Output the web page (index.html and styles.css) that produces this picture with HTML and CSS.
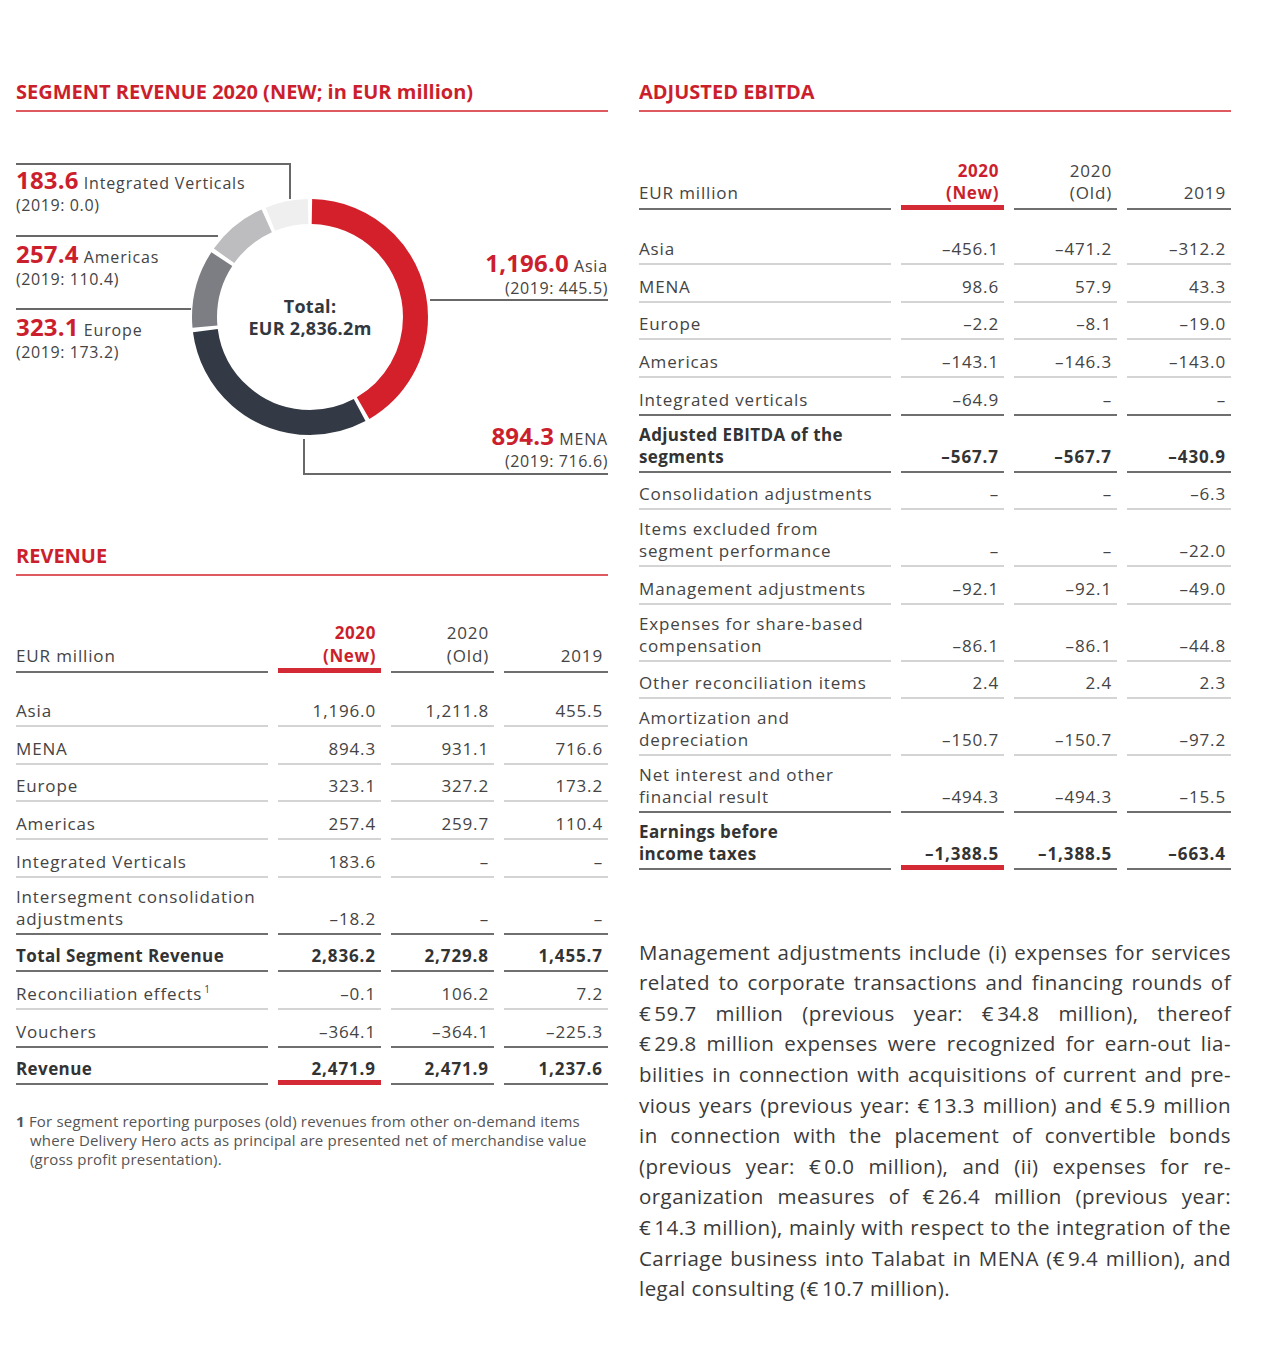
FILE: index.html
```html
<!DOCTYPE html>
<html lang="en">
<head>
<meta charset="utf-8">
<title>Segment revenue and adjusted EBITDA</title>
<link rel="stylesheet" href="styles.css">
</head>
<body>
<main class="page">
  <section class="col">
    <h2 class="heading">SEGMENT REVENUE 2020 (NEW; in EUR million)</h2>
    <div class="chart">
      <div class="leader leader-iv"></div>
      <div class="leader leader-am"></div>
      <div class="leader leader-eu"></div>
      <div class="leader leader-as"></div>
      <div class="leader leader-me"></div>

      <svg class="donut" width="236" height="236" viewBox="0 0 236 236">
        <g transform="rotate(-90 118 118)" fill="none" stroke-width="25">
          <circle cx="118" cy="118" r="105.5" pathLength="100" stroke="#d4202b" stroke-dasharray="41.3 58.7" stroke-dashoffset="-0.3"/>
          <circle cx="118" cy="118" r="105.5" pathLength="100" stroke="#343a45" stroke-dasharray="30.73 69.27" stroke-dashoffset="-42.2"/>
          <circle cx="118" cy="118" r="105.5" pathLength="100" stroke="#7d7e83" stroke-dasharray="10.72 89.28" stroke-dashoffset="-73.53"/>
          <circle cx="118" cy="118" r="105.5" pathLength="100" stroke="#bdbdbf" stroke-dasharray="8.42 91.58" stroke-dashoffset="-84.85"/>
          <circle cx="118" cy="118" r="105.5" pathLength="100" stroke="#efefef" stroke-dasharray="5.83 94.17" stroke-dashoffset="-93.87"/>
        </g>
      </svg>
      <div class="donut-total"><span>Total:</span><span>EUR 2,836.2m</span></div>

      <div class="lab lab-iv"><div><b>183.6</b> Integrated Verticals</div><div class="prev">(2019: 0.0)</div></div>
      <div class="lab lab-am"><div><b>257.4</b> Americas</div><div class="prev">(2019: 110.4)</div></div>
      <div class="lab lab-eu"><div><b>323.1</b> Europe</div><div class="prev">(2019: 173.2)</div></div>
      <div class="lab lab-as"><div><b>1,196.0</b> Asia</div><div class="prev">(2019: 445.5)</div></div>
      <div class="lab lab-me"><div><b>894.3</b> MENA</div><div class="prev">(2019: 716.6)</div></div>
    </div>

    <h2 class="heading">REVENUE</h2>
    <div class="table table-rev">
      <div class="row head">
        <div class="c"><span>EUR million</span></div>
        <div class="c n new"><span>2020<br>(New)</span></div>
        <div class="c n"><span>2020<br>(Old)</span></div>
        <div class="c n"><span>2019</span></div>
      </div>
      <div class="row first">
        <div class="c"><span>Asia</span></div><div class="c n"><span>1,196.0</span></div><div class="c n"><span>1,211.8</span></div><div class="c n"><span>455.5</span></div>
      </div>
      <div class="row">
        <div class="c"><span>MENA</span></div><div class="c n"><span>894.3</span></div><div class="c n"><span>931.1</span></div><div class="c n"><span>716.6</span></div>
      </div>
      <div class="row">
        <div class="c"><span>Europe</span></div><div class="c n"><span>323.1</span></div><div class="c n"><span>327.2</span></div><div class="c n"><span>173.2</span></div>
      </div>
      <div class="row">
        <div class="c"><span>Americas</span></div><div class="c n"><span>257.4</span></div><div class="c n"><span>259.7</span></div><div class="c n"><span>110.4</span></div>
      </div>
      <div class="row">
        <div class="c"><span>Integrated Verticals</span></div><div class="c n"><span>183.6</span></div><div class="c n"><span>–</span></div><div class="c n"><span>–</span></div>
      </div>
      <div class="row dark">
        <div class="c"><span>Intersegment consolidation<br>adjustments</span></div><div class="c n"><span>–18.2</span></div><div class="c n"><span>–</span></div><div class="c n"><span>–</span></div>
      </div>
      <div class="row dark total">
        <div class="c"><span>Total Segment Revenue</span></div><div class="c n"><span>2,836.2</span></div><div class="c n"><span>2,729.8</span></div><div class="c n"><span>1,455.7</span></div>
      </div>
      <div class="row">
        <div class="c"><span>Reconciliation effects<sup>1</sup></span></div><div class="c n"><span>–0.1</span></div><div class="c n"><span>106.2</span></div><div class="c n"><span>7.2</span></div>
      </div>
      <div class="row dark">
        <div class="c"><span>Vouchers</span></div><div class="c n"><span>–364.1</span></div><div class="c n"><span>–364.1</span></div><div class="c n"><span>–225.3</span></div>
      </div>
      <div class="row dark total">
        <div class="c"><span>Revenue</span></div><div class="c n red"><span>2,471.9</span></div><div class="c n"><span>2,471.9</span></div><div class="c n"><span>1,237.6</span></div>
      </div>
    </div>
    <p class="footnote"><b>1</b> For segment reporting purposes (old) revenues from other on-demand items<br>where Delivery Hero acts as principal are presented net of merchandise value<br>(gross profit presentation).</p>
  </section>

  <section class="col">
    <h2 class="heading">ADJUSTED EBITDA</h2>
    <div class="table table-ebitda">
      <div class="row head">
        <div class="c"><span>EUR million</span></div>
        <div class="c n new"><span>2020<br>(New)</span></div>
        <div class="c n"><span>2020<br>(Old)</span></div>
        <div class="c n"><span>2019</span></div>
      </div>
      <div class="row first">
        <div class="c"><span>Asia</span></div><div class="c n"><span>–456.1</span></div><div class="c n"><span>–471.2</span></div><div class="c n"><span>–312.2</span></div>
      </div>
      <div class="row">
        <div class="c"><span>MENA</span></div><div class="c n"><span>98.6</span></div><div class="c n"><span>57.9</span></div><div class="c n"><span>43.3</span></div>
      </div>
      <div class="row">
        <div class="c"><span>Europe</span></div><div class="c n"><span>–2.2</span></div><div class="c n"><span>–8.1</span></div><div class="c n"><span>–19.0</span></div>
      </div>
      <div class="row">
        <div class="c"><span>Americas</span></div><div class="c n"><span>–143.1</span></div><div class="c n"><span>–146.3</span></div><div class="c n"><span>–143.0</span></div>
      </div>
      <div class="row dark">
        <div class="c"><span>Integrated verticals</span></div><div class="c n"><span>–64.9</span></div><div class="c n"><span>–</span></div><div class="c n"><span>–</span></div>
      </div>
      <div class="row dark total">
        <div class="c"><span>Adjusted EBITDA of the<br>segments</span></div><div class="c n"><span>–567.7</span></div><div class="c n"><span>–567.7</span></div><div class="c n"><span>–430.9</span></div>
      </div>
      <div class="row">
        <div class="c"><span>Consolidation adjustments</span></div><div class="c n"><span>–</span></div><div class="c n"><span>–</span></div><div class="c n"><span>–6.3</span></div>
      </div>
      <div class="row">
        <div class="c"><span>Items excluded from<br>segment performance</span></div><div class="c n"><span>–</span></div><div class="c n"><span>–</span></div><div class="c n"><span>–22.0</span></div>
      </div>
      <div class="row">
        <div class="c"><span>Management adjustments</span></div><div class="c n"><span>–92.1</span></div><div class="c n"><span>–92.1</span></div><div class="c n"><span>–49.0</span></div>
      </div>
      <div class="row">
        <div class="c"><span>Expenses for share-based<br>compensation</span></div><div class="c n"><span>–86.1</span></div><div class="c n"><span>–86.1</span></div><div class="c n"><span>–44.8</span></div>
      </div>
      <div class="row">
        <div class="c"><span>Other reconciliation items</span></div><div class="c n"><span>2.4</span></div><div class="c n"><span>2.4</span></div><div class="c n"><span>2.3</span></div>
      </div>
      <div class="row">
        <div class="c"><span>Amortization and<br>depreciation</span></div><div class="c n"><span>–150.7</span></div><div class="c n"><span>–150.7</span></div><div class="c n"><span>–97.2</span></div>
      </div>
      <div class="row dark">
        <div class="c"><span>Net interest and other<br>financial result</span></div><div class="c n"><span>–494.3</span></div><div class="c n"><span>–494.3</span></div><div class="c n"><span>–15.5</span></div>
      </div>
      <div class="row dark total">
        <div class="c"><span>Earnings before<br>income taxes</span></div><div class="c n red"><span>–1,388.5</span></div><div class="c n"><span>–1,388.5</span></div><div class="c n"><span>–663.4</span></div>
      </div>
    </div>

    <div class="para">
      <span class="ln">Management adjustments include (i) expenses for services</span>
      <span class="ln">related to corporate transactions and financing rounds of</span>
      <span class="ln">€&#8239;59.7 million (previous year: €&#8239;34.8 million), thereof</span>
      <span class="ln">€&#8239;29.8 million expenses were recognized for earn-out lia-</span>
      <span class="ln">bilities in connection with acquisitions of current and pre-</span>
      <span class="ln">vious years (previous year: €&#8239;13.3 million) and €&#8239;5.9 million</span>
      <span class="ln">in connection with the placement of convertible bonds</span>
      <span class="ln">(previous year: €&#8239;0.0 million), and (ii) expenses for re-</span>
      <span class="ln">organization measures of €&#8239;26.4 million (previous year:</span>
      <span class="ln">€&#8239;14.3 million), mainly with respect to the integration of the</span>
      <span class="ln">Carriage business into Talabat in MENA (€&#8239;9.4 million), and</span>
      <span class="ln last">legal consulting (€&#8239;10.7 million).</span>
    </div>
  </section>
</main>
</body>
</html>
```

FILE: styles.css
```css
html, body {
  margin: 0;
  padding: 0;
  background: #ffffff;
}

body {
  font-family: "Open Sans", "Noto Sans", "Liberation Sans", sans-serif;
  color: #444444;
}

.page {
  display: flex;
  gap: 31px;
  padding: 80px 0 40px 16px;
}

.col {
  width: 592px;
  display: flex;
  flex-direction: column;
}

.heading {
  margin: 0;
  font-size: 20px;
  line-height: 24px;
  font-weight: 700;
  color: #cc1f2d;
  padding-bottom: 6px;
  border-bottom: 2px solid #de5960;
}

/* ---------- donut chart ---------- */
.chart {
  position: relative;
  height: 432px;
}

.leader {
  position: absolute;
  border: 0 solid #686868;
}

.leader-iv { left: 0; top: 51px; width: 273px; height: 34px; border-top-width: 2px; border-right-width: 2px; }
.leader-am { left: 0; top: 123px; width: 202px; border-top-width: 2px; }
.leader-eu { left: 0; top: 196px; width: 175px; border-top-width: 2px; }
.leader-as { left: 414px; top: 187px; width: 178px; border-top-width: 2px; }
.leader-me { left: 287px; top: 327px; width: 303px; height: 34px; border-left-width: 2px; border-bottom-width: 2px; }

.donut {
  position: absolute;
  left: 176px;
  top: 87px;
}

.donut-total {
  position: absolute;
  left: 176px;
  top: 87px;
  width: 236px;
  height: 236px;
  display: flex;
  flex-direction: column;
  align-items: center;
  justify-content: center;
  font-size: 18px;
  line-height: 22px;
  letter-spacing: 0.3px;
  font-weight: 700;
  color: #333840;
}

.lab {
  position: absolute;
  font-size: 16px;
  line-height: 22px;
  letter-spacing: 0.85px;
  color: #444444;
  white-space: nowrap;
}

.lab b {
  font-size: 24px;
  letter-spacing: 0.2px;
  font-weight: 700;
  color: #cc1f2d;
}

.lab .prev {
  font-size: 16px;
  letter-spacing: 0.6px;
}

.lab-iv { left: 0; top: 57px; }
.lab-am { left: 0; top: 131px; }
.lab-eu { left: 0; top: 204px; }
.lab-as { right: 0; top: 140px; text-align: right; }
.lab-me { right: 0; top: 313px; text-align: right; }

/* ---------- tables ---------- */
.table {
  display: grid;
  grid-template-columns: 252px 103px 103px 104px;
  column-gap: 10px;
  font-size: 17px;
  line-height: 22px;
  letter-spacing: 0.85px;
}

.table-rev { margin-top: 45px; }
.table-ebitda { margin-top: 48px; }

.row { display: contents; }

.c {
  box-sizing: border-box;
  display: flex;
  align-items: flex-end;
  min-height: 37.7px;
  padding: 7.8px 0 3px 0;
  border-bottom: 2px solid #d4d4d4;
}

.n {
  justify-content: flex-end;
  text-align: right;
  padding-right: 5px;
}

.row.first > .c { min-height: 54px; }
.table-ebitda .row.first > .c { min-height: 55px; }

.row.dark > .c { border-bottom-color: #6f6f6f; }

.row.total > .c {
  font-weight: 700;
  color: #333333;
  letter-spacing: 0.4px;
}

.row.total > .n {
  letter-spacing: 0.9px;
}

.row.head > .c {
  padding-top: 0;
  padding-bottom: 4px;
  line-height: 23px;
  border-bottom-color: #6f6f6f;
}

.table-ebitda .row.head > .c { line-height: 22px; }

.row.head > .new {
  color: #cc1f2d;
  font-weight: 700;
  letter-spacing: 0.6px;
  padding-bottom: 1px;
  border-bottom: 5px solid #d42a35;
}

.row > .c.red {
  padding-bottom: 0;
  border-bottom: 5px solid #d42a35;
}

sup {
  font-size: 10px;
  line-height: 0;
  vertical-align: 7px;
  margin-left: 2px;
}

.footnote {
  margin: 27px 0 0;
  font-size: 15px;
  line-height: 19px;
  letter-spacing: 0.2px;
  color: #555555;
  padding-left: 14px;
  text-indent: -14px;
}

.footnote b {
  font-weight: 700;
}

/* ---------- paragraph ---------- */
.para {
  margin-top: 67px;
  font-size: 20.5px;
  line-height: 30.6px;
  letter-spacing: 0.45px;
  color: #3a3a3a;
}

.ln {
  display: block;
  text-align: justify;
  text-align-last: justify;
  white-space: nowrap;
}

.ln.last {
  text-align-last: left;
}
```
